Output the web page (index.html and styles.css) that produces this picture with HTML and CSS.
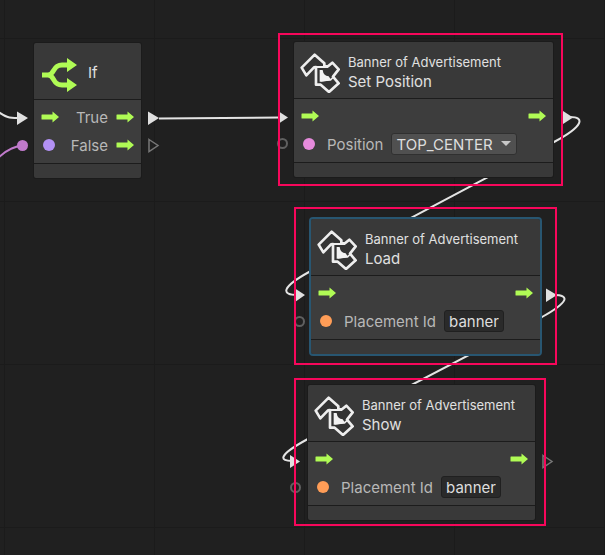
FILE: index.html
```html
<!DOCTYPE html>
<html lang="en">
<head>
  <meta charset="UTF-8">
  <meta name="viewport" content="width=device-width, initial-scale=1.0">
  <title>Banner Ads Graph</title>
  <link rel="stylesheet" href="styles.css">
</head>
<body>
  <!-- Shared icons -->
  <svg class="defs" aria-hidden="true">
    <symbol id="arrow" viewBox="0 0 18 12">
      <path d="M1 3.5H11.500V0.500L18 6L11.500 11.500V8.500H1Q0.500 8.500 0.500 8V4Q0.500 3.500 1 3.500Z" fill="#b0fb55"/>
    </symbol>
    <symbol id="branch" viewBox="0 0 40 40">
      <path d="M0 21H8M6 21C13 21 10 11 20 11H27M6 21C13 21 10 31 20 31H27" fill="none" stroke="#b0fb55" stroke-width="5"/>
      <path d="M25 4L35 11L25 18ZM25 24L35 31L25 38Z" fill="#b0fb55"/>
    </symbol>
    <symbol id="banner" viewBox="0 0 120 120">
      <path d="M44 5L5 44L19 67L42 43L48 42V95H62L87 117L116 91L99 71L116 49L97 29L84 40H73V31Z" fill="#333" stroke="#eee" stroke-width="8" stroke-linejoin="round"/>
      <path d="M46 42H84" fill="none" stroke="#eee" stroke-width="6"/>
      <path d="M62 84L92 80L101 72" fill="none" stroke="#eee" stroke-width="5"/>
      <path d="M59 51H68Q70 68 86 70L94 82L59 86Z" fill="#f2f2f2"/>
    </symbol>
  </svg>

  <main class="graph">
    <svg class="wires" width="605" height="555" aria-hidden="true">
      <!-- Connections -->
      <g fill="none" stroke="#e4e4e4" stroke-width="2">
        <path d="M-4 110C6 118 10 118 18 118"/>
        <path d="M159 118.500L280 117.500"/>
        <path d="M570 117C585 117 584 126 554 142L309 272C280 288 282 295 297 295"/>
        <path d="M554 295C570 295 569 302 542 317L306 440C277 456 280 461 292 461"/>
      </g>
      <path d="M-4 160Q10 146 22 146" fill="none" stroke="#c07acb" stroke-width="2"/>

      <!-- Flow ports -->
      <g fill="#e0e0e0">
        <path d="M17 111.500L28 118L17 125Z"/>
        <path d="M148 111.500L159 118L148 125Z"/>
        <path d="M278 111L288 117.500L278 124Z"/>
        <path d="M563 111L573 117.500L563 124Z"/>
        <path d="M295 288.500L305 295L295 302Z"/>
        <path d="M546 288.500L557 295L546 302Z"/>
        <path d="M290 455L300 461.500L290 468Z"/>
      </g>
      <g fill="none" stroke="#777" stroke-width="1.500">
        <path d="M149 139.500L158 145.500L149 151.500Z"/>
        <path d="M543 455.500L552 461.500L543 467.500Z"/>
      </g>

      <!-- Value ports -->
      <circle cx="22.500" cy="145.500" r="5.500" fill="#c07acb"/>
      <g fill="none" stroke="#606060" stroke-width="2">
        <circle cx="282.500" cy="143.500" r="4.500"/>
        <circle cx="299.500" cy="321.500" r="4.500"/>
        <circle cx="295.500" cy="487.500" r="4.500"/>
      </g>
    </svg>

    <section class="node node-if">
      <header class="node-header">
        <svg class="node-icon"><use href="#branch"/></svg>
        <h2>If</h2>
      </header>
      <div class="node-body">
        <div class="row">
          <svg class="arrow"><use href="#arrow"/></svg>
          <span class="label output">True</span>
          <svg class="arrow"><use href="#arrow"/></svg>
        </div>
        <div class="row">
          <span class="dot bool"></span>
          <span class="label output">False</span>
          <svg class="arrow"><use href="#arrow"/></svg>
        </div>
      </div>
      <div class="node-footer"></div>
    </section>

    <section class="node node-position">
      <header class="node-header">
        <svg class="node-icon"><use href="#banner"/></svg>
        <div>
          <p>Banner of Advertisement</p>
          <h2>Set Position</h2>
        </div>
      </header>
      <div class="node-body">
        <div class="row ends">
          <svg class="arrow"><use href="#arrow"/></svg>
          <svg class="arrow"><use href="#arrow"/></svg>
        </div>
        <div class="row">
          <span class="dot enum"></span>
          <label class="label" for="position">Position</label>
          <span class="select">
            <select id="position">
              <option>TOP_CENTER</option>
            </select>
          </span>
        </div>
      </div>
      <div class="node-footer"></div>
    </section>

    <section class="node node-load selected">
      <header class="node-header">
        <svg class="node-icon"><use href="#banner"/></svg>
        <div>
          <p>Banner of Advertisement</p>
          <h2>Load</h2>
        </div>
      </header>
      <div class="node-body">
        <div class="row ends">
          <svg class="arrow"><use href="#arrow"/></svg>
          <svg class="arrow"><use href="#arrow"/></svg>
        </div>
        <div class="row">
          <span class="dot string"></span>
          <label class="label" for="loadPlacement">Placement Id</label>
          <input type="text" id="loadPlacement" value="banner">
        </div>
      </div>
      <div class="node-footer"></div>
    </section>

    <section class="node node-show">
      <header class="node-header">
        <svg class="node-icon"><use href="#banner"/></svg>
        <div>
          <p>Banner of Advertisement</p>
          <h2>Show</h2>
        </div>
      </header>
      <div class="node-body">
        <div class="row ends">
          <svg class="arrow"><use href="#arrow"/></svg>
          <svg class="arrow"><use href="#arrow"/></svg>
        </div>
        <div class="row">
          <span class="dot string"></span>
          <label class="label" for="showPlacement">Placement Id</label>
          <input type="text" id="showPlacement" value="banner">
        </div>
      </div>
      <div class="node-footer"></div>
    </section>

    <!-- Highlight frames -->
    <div class="frame frame-position"></div>
    <div class="frame frame-load"></div>
    <div class="frame frame-show"></div>
  </main>
</body>
</html>
```

FILE: styles.css
```css
* {
  box-sizing: border-box;
}

body {
  margin: 0;
  background-color: #202020;
  color: #e0e0e0;
  font-family: Inter, sans-serif;
  font-size: 15px;
}

.defs {
  position: absolute;
  width: 0;
  height: 0;
}

.graph {
  position: relative;
  min-height: 100vh;
  overflow: hidden;
  background-image:
    linear-gradient(to right, #1b1b1b 1px, transparent 1px),
    linear-gradient(to bottom, #1b1b1b 1px, transparent 1px);
  background-size: 150px 163px;
  background-position: 4px 38px;
}

.wires {
  position: absolute;
  top: 0;
  left: 0;
}

/* Nodes */
.node {
  position: absolute;
  border-radius: 2px;
  background-color: #393939;
  box-shadow: 0 0 0 1px #1b1b1b;
}

.node-if {
  left: 34px;
  top: 43px;
  width: 107px;
}

.node-position {
  left: 294px;
  top: 42px;
  width: 259px;
}

.node-load {
  left: 311px;
  top: 219px;
  width: 229px;
}

.node-show {
  left: 308px;
  top: 385px;
  width: 227px;
}

.selected {
  outline: 2px solid #285671;
}

.node-header {
  display: flex;
  align-items: center;
  gap: 8px;
  height: 56px;
  padding: 8px 6px 5px;
}

.node-icon {
  align-self: flex-end;
  width: 40px;
  height: 40px;
}

.node-if .node-header {
  padding-left: 8px;
  gap: 6px;
}

h2,
p {
  margin: 0;
  font-weight: normal;
  line-height: 20px;
}

h2 {
  font-size: 15px;
}

p {
  font-size: 13px;
}

.node-body {
  padding: 3px 7px 4px;
  border-top: 1px solid #1c1c1c;
  border-bottom: 1px solid #1c1c1c;
  background-color: #3d3d3d;
}

.node-footer {
  height: 14px;
}

.row {
  display: flex;
  align-items: center;
  height: 28px;
}

.ends {
  justify-content: space-between;
}

.arrow {
  width: 18px;
  height: 12px;
}

.dot {
  width: 12px;
  height: 12px;
  margin: 0 12px 0 2px;
  border-radius: 50%;
}

.bool {
  background-color: #b391f5;
}

.enum {
  background-color: #e68bdc;
}

.string {
  background-color: #ff9d57;
}

.label {
  margin-right: 8px;
  color: #b8b8b8;
}

.output {
  margin-left: auto;
}

/* Fields */
select,
input {
  height: 22px;
  border-radius: 3px;
  color: #dedede;
  font-family: inherit;
  font-size: 15px;
}

.select {
  position: relative;
}

.select::after {
  content: "";
  position: absolute;
  right: 6px;
  top: 8px;
  border: 5px solid transparent;
  border-top-color: #c8c8c8;
  border-bottom: 0;
  pointer-events: none;
}

select {
  appearance: none;
  display: block;
  width: 126px;
  padding: 0 4px;
  border: 1px solid #303030;
  background-color: #505050;
}

input {
  width: 60px;
  padding: 0 4px;
  border: 1px solid #202020;
  background-color: #2a2a2a;
}

/* Highlight frames */
.frame {
  position: absolute;
  border: 2px solid #f7075b;
  pointer-events: none;
}

.frame-position {
  left: 278px;
  top: 33px;
  width: 285px;
  height: 153px;
}

.frame-load {
  left: 294px;
  top: 207px;
  width: 263px;
  height: 158px;
}

.frame-show {
  left: 294px;
  top: 378px;
  width: 252px;
  height: 148px;
}
```
